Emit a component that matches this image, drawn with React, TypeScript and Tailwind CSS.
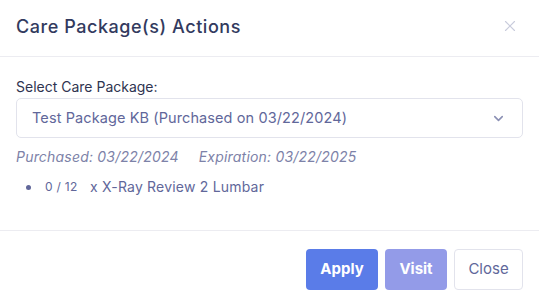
import { ChevronDown, X } from "lucide-react";

export default function App() {
  return (
    <div className="w-[539px] h-[305px] bg-white text-[#343b5e] font-['Inter',sans-serif] flex flex-col">
      {/* header */}
      <div className="h-[57px] flex items-center justify-between px-4 border-b border-[#ececf1]">
        <h2 className="text-[18px] font-medium tracking-[0.55px] text-[#323a5e] -mt-[4px]">
          Care Package(s) Actions
        </h2>
        <button className="text-[#c9ccdc] mr-[4px] -mt-[5px]">
          <X size={18} strokeWidth={1.5} />
        </button>
      </div>

      {/* body */}
      <div className="px-4 pt-[20px] h-[173px]">
        <label className="block text-[14px] text-[#2f3450] leading-[20px]">Select Care Package:</label>
        <div className="mt-[1px] h-[40px] rounded-[5px] border border-[#e2e3ec] flex items-center justify-between pl-[15px] pr-[16px]">
          <span className="text-[14.5px] text-[#61679a] tracking-[0.1px]">
            Test Package KB (Purchased on 03/22/2024)
          </span>
          <ChevronDown size={15} strokeWidth={2.5} className="text-[#8b90b4]" />
        </div>
        <div className="mt-[9px] text-[14px] italic text-[#7d82a8] flex gap-[20px] leading-[20px] tracking-[0.2px]">
          <span>Purchased: 03/22/2024</span>
          <span>Expiration: 03/22/2025</span>
        </div>
        <ul className="mt-[10px] pl-[10px] text-[#61679a]">
          <li className="flex items-center leading-[20px]">
            <span className="w-[5px] h-[5px] rounded-full bg-[#61679a] mr-[14px]" />
            <span className="text-[12px] w-[45px] tracking-[0.3px]">0 / 12</span>
            <span className="text-[14px] tracking-[0.2px]">x X-Ray Review 2 Lumbar</span>
          </li>
        </ul>
      </div>

      {/* footer */}
      <div className="border-t border-[#ececf1] flex justify-end gap-[7px] pl-4 pr-[16px] pt-[18px]">
        <button className="h-[41px] w-[72px] rounded-[4px] bg-[#5a7ce8] text-white text-[15px] font-bold">
          Apply
        </button>
        <button className="h-[41px] w-[62px] rounded-[4px] bg-[#939be8] text-white text-[15px] font-bold">
          Visit
        </button>
        <button className="h-[41px] w-[69px] rounded-[4px] border border-[#e2e3ec] text-[#61679a] text-[15px]">
          Close
        </button>
      </div>
    </div>
  );
}
